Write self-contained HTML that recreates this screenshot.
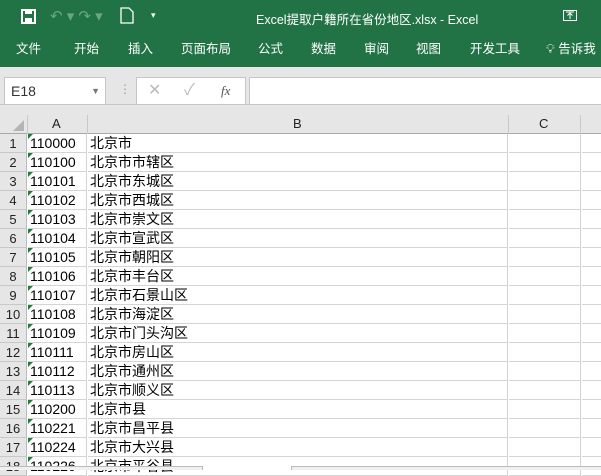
<!DOCTYPE html>
<html><head><meta charset="utf-8"><style>
*{margin:0;padding:0;box-sizing:border-box}
body{width:601px;height:470px;overflow:hidden;position:relative;background:#fff;font-family:"Liberation Sans","Noto Sans CJK SC",sans-serif}
.a{position:absolute}
.g{background:#217346}
.w{color:#fff;font-size:12px}
.tab{position:absolute;top:38px;color:#fff;font-size:12.5px}
.rh{position:absolute;left:0;width:27px;text-align:center;font-size:13px;color:#222;background:#e6e6e6;border-right:1px solid #bbb;border-bottom:1px solid #c8c8c8;height:19px;line-height:19px}
.ca{position:absolute;left:28px;width:59px;font-size:14px;height:19px;line-height:19px;padding-left:2px;color:#000;border-bottom:1px solid #d4d4d4;border-right:1px solid #d4d4d4}
.cb{position:absolute;left:88px;width:420px;font-size:14px;height:19px;line-height:19px;padding-left:2px;color:#000;border-bottom:1px solid #d4d4d4;border-right:1px solid #d4d4d4}
.cc{position:absolute;left:509px;width:72px;height:19px;border-bottom:1px solid #d4d4d4;border-right:1px solid #d4d4d4}
.cd{position:absolute;left:582px;width:30px;height:19px;border-bottom:1px solid #d4d4d4}
.tri{position:absolute;left:28px;width:0;height:0;border-top:5px solid #1e7e34;border-right:5px solid transparent}
</style></head><body>
<div class="a g" style="left:0;top:0;width:601px;height:67px"></div>
<svg class="a" style="left:20px;top:8px" width="18" height="18" viewBox="0 0 18 18"><rect x="2" y="2" width="13" height="13" fill="none" stroke="#fff" stroke-width="2"/><rect x="5" y="2" width="7" height="4" fill="#fff"/><rect x="5" y="10" width="7" height="5" fill="#fff"/></svg>
<div class="a" style="left:50px;top:7px;color:#6aa584;font-size:15px">↶ ▾ ↷ ▾</div>
<svg class="a" style="left:120px;top:7px" width="14" height="17"><path d="M1 1h8l4 4v11H1z" fill="none" stroke="#fff" stroke-width="1.3"/></svg>
<div class="a w" style="left:151px;top:10px;font-size:9px">▾</div>
<div class="a w" style="left:256px;top:9px;font-size:12.5px">Excel提取户籍所在省份地区.xlsx - Excel</div>
<svg class="a" style="left:563px;top:10px" width="14" height="11"><rect x=".5" y=".5" width="13" height="10" fill="none" stroke="#fff"/><path d="M7 9V3M4.5 5.5L7 3l2.5 2.5M3 2h8" stroke="#fff" fill="none"/></svg>
<div class="tab" style="left:16px">文件</div>
<div class="tab" style="left:74px">开始</div>
<div class="tab" style="left:128px">插入</div>
<div class="tab" style="left:181px">页面布局</div>
<div class="tab" style="left:258px">公式</div>
<div class="tab" style="left:311px">数据</div>
<div class="tab" style="left:364px">审阅</div>
<div class="tab" style="left:416px">视图</div>
<div class="tab" style="left:470px">开发工具</div>
<div class="tab" style="left:546px">💡︎ 告诉我</div>
<div class="a" style="left:0;top:67px;width:601px;height:48px;background:#e6e6e6"></div>
<div class="a" style="left:4px;top:77px;width:102px;height:28px;background:#fff;border:1px solid #c6c6c6;font-size:14px;line-height:26px;padding-left:6px;color:#333">E18<span style="position:absolute;right:5px;top:0;font-size:9px;color:#777">▼</span></div>
<div class="a" style="left:119px;top:82px;color:#999;font-size:12px">⋮</div>
<div class="a" style="left:136px;top:77px;width:110px;height:28px;background:#fff;border:1px solid #c6c6c6;color:#bbb;font-size:16px;line-height:26px"><span style="position:absolute;left:11px">✕</span><span style="position:absolute;left:47px">✓</span><span style="position:absolute;left:84px;color:#555;font-style:italic;font-family:'Liberation Serif',serif;font-size:13px">fx</span></div>
<div class="a" style="left:249px;top:77px;width:360px;height:28px;background:#fff;border:1px solid #c6c6c6"></div>
<div class="a" style="left:0;top:104px;width:601px;height:1px;background:#c6c6c6"></div>
<div class="a" style="left:0;top:115px;width:601px;height:19px;background:#e6e6e6;border-bottom:1px solid #a9a9a9"></div>
<div class="a" style="left:13px;top:120px;width:0;height:0;border-bottom:11px solid #b4b4b4;border-left:11px solid transparent"></div>
<div class="a" style="left:27px;top:115px;width:1px;height:19px;background:#c8c8c8"></div>
<div class="a" style="left:87px;top:115px;width:1px;height:19px;background:#c8c8c8"></div>
<div class="a" style="left:508px;top:115px;width:1px;height:19px;background:#c8c8c8"></div>
<div class="a" style="left:580px;top:115px;width:1px;height:19px;background:#c8c8c8"></div>
<div class="a" style="left:52px;top:116px;font-size:13px;color:#222">A</div>
<div class="a" style="left:293px;top:116px;font-size:13px;color:#222">B</div>
<div class="a" style="left:539px;top:116px;font-size:13px;color:#222">C</div>
<div id="rows"></div>
<script>
var d=[["110000","北京市"],["110100","北京市市辖区"],["110101","北京市东城区"],["110102","北京市西城区"],["110103","北京市崇文区"],["110104","北京市宣武区"],["110105","北京市朝阳区"],["110106","北京市丰台区"],["110107","北京市石景山区"],["110108","北京市海淀区"],["110109","北京市门头沟区"],["110111","北京市房山区"],["110112","北京市通州区"],["110113","北京市顺义区"],["110200","北京市县"],["110221","北京市昌平县"],["110224","北京市大兴县"],["110226","北京市平谷县"]];
var h="";
for(var i=0;i<d.length;i++){var t=134+19*i;
h+='<div class="rh" style="top:'+t+'px">'+(i+1)+'</div><div class="ca" style="top:'+t+'px">'+d[i][0]+'</div><div class="cb" style="top:'+t+'px">'+d[i][1]+'</div><div class="cc" style="top:'+t+'px"></div><div class="cd" style="top:'+t+'px"></div><div class="tri" style="top:'+t+'px"></div>';}
document.getElementById("rows").innerHTML=h;
</script>
<div class="a" style="left:0;top:466px;width:203px;height:4px;background:#f0f0f0;border-top:1px solid #bbb;border-right:1px solid #bbb"></div>
<div class="a" style="left:291px;top:466px;width:310px;height:4px;background:#f0f0f0;border-top:1px solid #bbb;border-left:1px solid #bbb"></div>
</body></html>
